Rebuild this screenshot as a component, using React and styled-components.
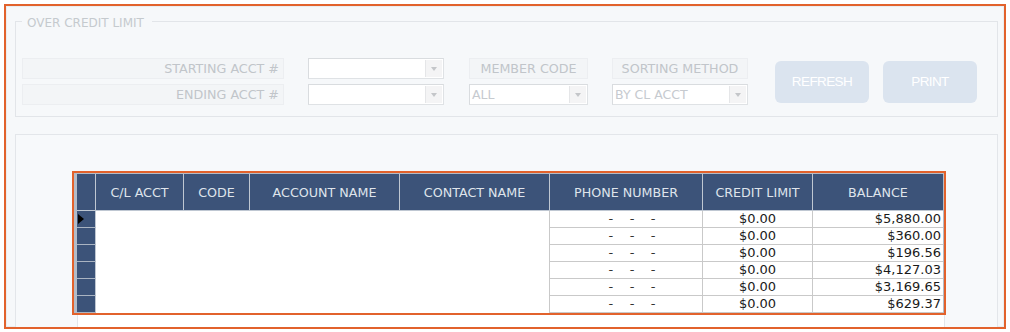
import React from 'react';
import styled, { createGlobalStyle } from 'styled-components';

const GlobalStyle = createGlobalStyle`
  html, body { margin: 0; padding: 0; background: #ffffff; }
  body { font-family: "DejaVu Sans", Verdana, sans-serif; }
`;

const Frame = styled.div`
  box-sizing: border-box;
  margin: 4px 0 0 4px;
  width: 1002px;
  height: 325px;
  border: 2px solid #e2622c;
  box-shadow: inset 0 0 0 1px #eaedf0;
  background: #f6f8fa;
  overflow: hidden;
  display: flex;
  flex-direction: column;
  padding: 7px 6px 0 9px;
`;

const GroupBox = styled.fieldset`
  box-sizing: border-box;
  margin: 0;
  height: 104px;
  padding: 29px 0 11px 6px;
  border: 1px solid #e2e5e9;
  display: flex;
  align-items: center;
  flex: none;
`;

const Legend = styled.legend`
  padding: 0 8px 0 5px;
  margin: 0;
  position: relative;
  top: 2px;
  font-family: "DejaVu Sans", Verdana, sans-serif;
  font-size: 12px;
  line-height: 16px;
  color: #c5cace;
`;

const Column = styled.div`
  display: flex;
  flex-direction: column;
  gap: 5px;
  width: ${(p) => p.$width}px;
  margin-left: ${(p) => p.$ml || 0}px;
  flex: none;
`;

const LabelBox = styled.div`
  box-sizing: border-box;
  height: 21px;
  border: 1px solid #eceef1;
  background: #f3f5f7;
  font-size: 12.7px;
  line-height: 19px;
  color: #c1c5ca;
  text-align: ${(p) => p.$align || 'right'};
  padding: 0 4px;
  white-space: nowrap;
`;

const Combo = styled.div`
  box-sizing: border-box;
  height: 21px;
  border: 1px solid #dfe2e5;
  border-top-color: #d9dcdf;
  border-left-color: #d9dcdf;
  background: #ffffff;
  display: flex;
`;

const ComboText = styled.div`
  flex: 1;
  padding-left: 2px;
  font-size: 12.5px;
  line-height: 19px;
  color: #c6cacf;
  white-space: nowrap;
  overflow: hidden;
`;

const ComboArrow = styled.div`
  box-sizing: border-box;
  width: 17px;
  margin: 1px;
  background: #f4f4f5;
  border-left: 1px solid #e5e6e8;
  display: flex;
  align-items: center;
  justify-content: center;

  &::after {
    content: '';
    border-left: 3.5px solid transparent;
    border-right: 3.5px solid transparent;
    border-top: 4px solid #c4c6c9;
  }
`;

const Button = styled.div`
  box-sizing: border-box;
  width: 94px;
  height: 42px;
  margin-left: ${(p) => p.$ml}px;
  border-radius: 6px;
  background: #dbe4ef;
  color: #ffffff;
  font-family: "Liberation Sans", Arial, sans-serif;
  font-size: 13.5px;
  letter-spacing: -0.6px;
  display: flex;
  align-items: center;
  justify-content: center;
  flex: none;
`;

const GridPanel = styled.div`
  margin-top: 17px;
  flex: 1 0 auto;
  min-height: 260px;
  border: 1px solid #e3e6ea;
  background: #f7f9fb;
  padding: 36px 0 0 56px;
  display: flex;
  flex-direction: column;
`;

const TableFrame = styled.div`
  box-sizing: border-box;
  width: 874px;
  border: 2px solid #e2622c;
  flex: none;
  background: #ffffff;
`;

const Grid = styled.table`
  width: 870px;
  table-layout: fixed;
  border-collapse: separate;
  border-spacing: 0;
  border-style: solid;
  border-color: #b3bcc8;
  border-width: 1px 1px 0 3px;
  font-family: "DejaVu Sans", Verdana, sans-serif;
`;

const HeadCell = styled.th`
  height: 36px;
  padding: 0;
  background: #3c5379;
  color: #dfe4eb;
  font-weight: normal;
  font-size: 12.7px;
  text-align: center;
  white-space: nowrap;
  border-right: 1px solid #bfc7d2;
  border-bottom: 1px solid #bfc7d2;
  &:last-child { border-right: none; }
`;

const RowHead = styled.td`
  height: 16px;
  padding: 0 0 0 1px;
  background: #3c5379;
  border-right: 1px solid #bfc7d2;
  border-bottom: 1px solid #aab4c2;
  line-height: 0;
`;

const Blank = styled.td`
  height: 16px;
  padding: 0;
  background: #ffffff;
  border-right: ${(p) => (p.$edge ? '1px solid #c9c9c9' : 'none')};
`;

const DataCell = styled.td`
  height: 16px;
  padding: ${(p) => (p.$align === 'right' ? '0 2px 0 0' : p.$indent ? `0 0 0 ${p.$indent}px` : '0')};
  background: #ffffff;
  color: ${(p) => (p.$dim ? '#333333' : '#1a1a1a')};
  font-size: 13px;
  line-height: 16px;
  text-align: ${(p) => p.$align || 'center'};
  white-space: pre;
  overflow: hidden;
  border-right: 1px solid #c9c9c9;
  border-bottom: 1px solid #c9c9c9;
  &:last-child { border-right: none; }
`;

const WhiteFill = styled.div`
  box-sizing: border-box;
  margin-left: 5px;
  width: 868px;
  flex: 1;
  background: #ffffff;
  border-left: 1px solid #e3e6ea;
  border-right: 1px solid #e3e6ea;
`;

const Pointer = () => (
  <svg width="6" height="10" viewBox="0 0 6 10">
    <polygon points="0,0 6,5 0,10" fill="#000000" />
  </svg>
);

const columns = [
  { label: '', w: 19 },
  { label: 'C/L ACCT', w: 88 },
  { label: 'CODE', w: 66 },
  { label: 'ACCOUNT NAME', w: 150 },
  { label: 'CONTACT NAME', w: 150 },
  { label: 'PHONE NUMBER', w: 153 },
  { label: 'CREDIT LIMIT', w: 110 },
  { label: 'BALANCE', w: 130 },
];

const rows = [
  { credit: '$0.00', balance: '$5,880.00' },
  { credit: '$0.00', balance: '$360.00' },
  { credit: '$0.00', balance: '$196.56' },
  { credit: '$0.00', balance: '$4,127.03' },
  { credit: '$0.00', balance: '$3,169.65' },
  { credit: '$0.00', balance: '$629.37' },
];

export default function App() {
  return (
    <>
      <GlobalStyle />
      <Frame>
        <GroupBox>
          <Legend>OVER CREDIT LIMIT</Legend>
          <Column $width={262}>
            <LabelBox>STARTING ACCT #</LabelBox>
            <LabelBox>ENDING ACCT #</LabelBox>
          </Column>
          <Column $width={136} $ml={24}>
            <Combo><ComboText /><ComboArrow /></Combo>
            <Combo><ComboText /><ComboArrow /></Combo>
          </Column>
          <Column $width={119} $ml={25}>
            <LabelBox $align="center">MEMBER CODE</LabelBox>
            <Combo><ComboText>ALL</ComboText><ComboArrow /></Combo>
          </Column>
          <Column $width={136} $ml={24}>
            <LabelBox $align="center">SORTING METHOD</LabelBox>
            <Combo><ComboText>BY CL ACCT</ComboText><ComboArrow /></Combo>
          </Column>
          <Button $ml={27}>REFRESH</Button>
          <Button $ml={14}>PRINT</Button>
        </GroupBox>
        <GridPanel>
          <TableFrame>
            <Grid>
              <colgroup>
                {columns.map((c, i) => (
                  <col key={i} style={{ width: c.w }} />
                ))}
              </colgroup>
              <thead>
                <tr>
                  {columns.map((c, i) => (
                    <HeadCell key={i}>{c.label}</HeadCell>
                  ))}
                </tr>
              </thead>
              <tbody>
                {rows.map((r, i) => (
                  <tr key={i}>
                    <RowHead>{i === 0 && <Pointer />}</RowHead>
                    <Blank />
                    <Blank />
                    <Blank />
                    <Blank $edge />
                    <DataCell $indent={12} $dim>{'-    -    -'}</DataCell>
                    <DataCell>{r.credit}</DataCell>
                    <DataCell $align="right">{r.balance}</DataCell>
                  </tr>
                ))}
              </tbody>
            </Grid>
          </TableFrame>
          <WhiteFill />
        </GridPanel>
      </Frame>
    </>
  );
}
